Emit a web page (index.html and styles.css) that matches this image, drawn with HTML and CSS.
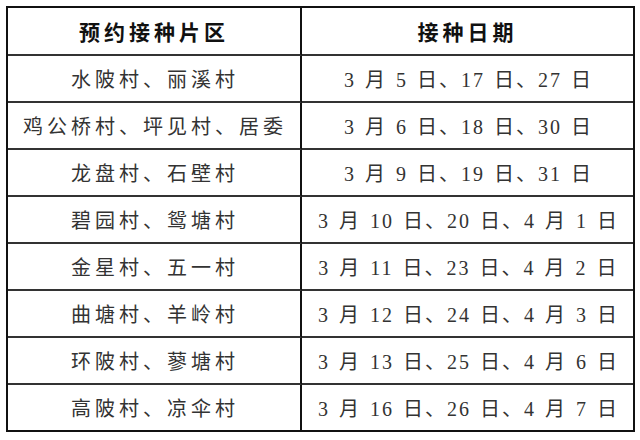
FILE: index.html
```html
<!DOCTYPE html>
<html lang="zh-CN">
<head>
<meta charset="utf-8">
<link rel="stylesheet" href="styles.css">
</head>
<body>
<table class="sched">
  <colgroup><col class="c1"><col class="c2"></colgroup>
  <thead>
    <tr><th class="area">预约接种片区</th><th class="date">接种日期</th></tr>
  </thead>
  <tbody>
    <tr><td class="area">水陂村、丽溪村</td><td class="date">3 月 5 日、17 日、27 日</td></tr>
    <tr><td class="area">鸡公桥村、坪见村、居委</td><td class="date">3 月 6 日、18 日、30 日</td></tr>
    <tr><td class="area">龙盘村、石壁村</td><td class="date">3 月 9 日、19 日、31 日</td></tr>
    <tr><td class="area">碧园村、鸳塘村</td><td class="date">3 月 10 日、20 日、4 月 1 日</td></tr>
    <tr><td class="area">金星村、五一村</td><td class="date">3 月 11 日、23 日、4 月 2 日</td></tr>
    <tr><td class="area">曲塘村、羊岭村</td><td class="date">3 月 12 日、24 日、4 月 3 日</td></tr>
    <tr><td class="area">环陂村、蓼塘村</td><td class="date">3 月 13 日、25 日、4 月 6 日</td></tr>
    <tr><td class="area">高陂村、凉伞村</td><td class="date">3 月 16 日、26 日、4 月 7 日</td></tr>
  </tbody>
</table>
</body>
</html>
```
FILE: styles.css
```css
html, body {
  margin: 0;
  padding: 0;
  background: #ffffff;
}
body {
  padding: 6px 0 0 6px;
}
.sched {
  border-collapse: separate;
  border-spacing: 0;
  table-layout: fixed;
  width: 627px;
  border: 2px solid #111;
  font-family: "Liberation Serif", "Noto Sans CJK SC", serif;
}
.c1 { width: 294px; }
.c2 { width: 331px; }
.sched th, .sched td {
  height: 45px;
  padding: 0;
  text-align: center;
  vertical-align: middle;
  border-bottom: 2px solid #333;
  white-space: nowrap;
  overflow: hidden;
}
.sched tbody tr:last-child td {
  border-bottom: 0;
}
.sched .area {
  border-right: 2px solid #111;
}
.sched th {
  font-family: "Noto Sans CJK SC", sans-serif;
  font-weight: 700;
  font-size: 21px;
  color: #111;
  letter-spacing: 4px;
  height: 46px;
}
.sched td {
  font-size: 20px;
  font-weight: 400;
  color: #333;
}
.sched td.area {
  letter-spacing: 4px;
  padding-left: 2px;
}
.sched td.date {
  letter-spacing: 2px;
  word-spacing: 2px;
  padding-left: 2px;
}
```
